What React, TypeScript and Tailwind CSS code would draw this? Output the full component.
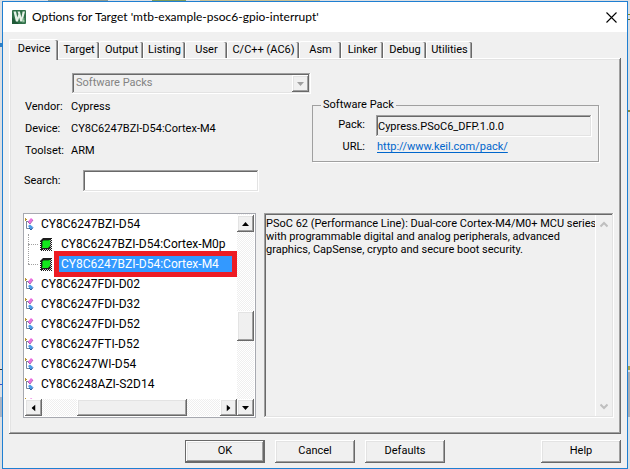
import type { ReactNode } from 'react'
import clsx from 'clsx'

const RAISED =
  'bg-[#f0f0f0] shadow-[inset_-1px_-1px_#696969,inset_1px_1px_#fff,inset_-2px_-2px_#a0a0a0,inset_2px_2px_#e3e3e3]'
const SUNKEN =
  'shadow-[inset_-1px_-1px_#fff,inset_1px_1px_#a0a0a0,inset_-2px_-2px_#e3e3e3,inset_2px_2px_#696969]'
const TRACK = 'bg-[repeating-conic-gradient(#fff_0_25%,#efefef_0_50%)] bg-[size:2px_2px]'

const TABS = [
  { label: 'Device', width: 'w-[49px]' },
  { label: 'Target', width: 'w-[41px]' },
  { label: 'Output', width: 'w-[44px]' },
  { label: 'Listing', width: 'w-[42px]' },
  { label: 'User', width: 'w-[42px]' },
  { label: 'C/C++ (AC6)', width: 'w-[72px]' },
  { label: 'Asm', width: 'w-[42px]' },
  { label: 'Linker', width: 'w-[42px]' },
  { label: 'Debug', width: 'w-[43px]' },
  { label: 'Utilities', width: 'w-[46px]' },
]

const DETAILS = [
  ['Vendor:', 'Cypress'],
  ['Device:', 'CY8C6247BZI-D54:Cortex-M4'],
  ['Toolset:', 'ARM'],
]

const DEVICES = [
  {
    name: 'CY8C6247BZI-D54',
    cores: ['CY8C6247BZI-D54:Cortex-M0p', 'CY8C6247BZI-D54:Cortex-M4'],
  },
  { name: 'CY8C6247FDI-D02' },
  { name: 'CY8C6247FDI-D32' },
  { name: 'CY8C6247FDI-D52' },
  { name: 'CY8C6247FTI-D52' },
  { name: 'CY8C6247WI-D54' },
  { name: 'CY8C6248AZI-S2D14' },
  { name: '' },
]

const SELECTED = 'CY8C6247BZI-D54:Cortex-M4'

const DESCRIPTION = `PSoC 62 (Performance Line): Dual-core Cortex-M4/M0+ MCU series
with programmable digital and analog peripherals, advanced
graphics, CapSense, crypto and secure boot security.`

function AppIcon() {
  return (
    <svg className="size-[14px]" viewBox="0 0 14 14" aria-hidden="true">
      <rect width="14" height="14" rx="1" fill="#2f7048" />
      <path d="M0 14V7L7 14Z" fill="#1f5a38" />
      <path d="M1.500 1.500h2.500l1.300 6L6.400 4 5.500 1.500h2.400l1.500 6L10.600 1.500h2.400L10.400 11.500H8.200L7.200 7.500 6 11.500H3.900Z" fill="#e6f1e7" />
      <path d="M10 8.500h2.500v1h-1.200v.6h1.200v2.200H10v-.8h1.200v-.6H10Z" fill="#a5cfae" />
    </svg>
  )
}

function FamilyIcon() {
  return (
    <svg className="h-[14px] w-[9px] shrink-0" viewBox="0 0 9 14" aria-hidden="true">
      <path d="M0 1h1v1h1v1H1v1H0Z" fill="#b8912c" />
      <path d="M1.500 4v7.500M1.500 4.500H4M1.500 11.500H4" stroke="#77839b" fill="none" />
      <path d="M3 4.500 6 1l2 1.500L5 6.500Z" fill="#ea6fe0" />
      <path d="M3 5 5 7l3-4" stroke="#9c3fa0" strokeWidth=".8" fill="none" />
      <path d="m3 9 2-1.500L8 10l-2 3Z" fill="#4a9be8" />
      <path d="m4 11 2 2 2-2.500" stroke="#245a9e" fill="none" />
    </svg>
  )
}

function ChipIcon() {
  return (
    <svg className="h-[13px] w-3 shrink-0" viewBox="0 0 12 13" aria-hidden="true">
      <path d="M3 0h9v13H0V3Z" fill="#1c1c1c" />
      <path d="M3 11.500h9M10.500 2v10" stroke="#b5b5b5" strokeDasharray="1 1" />
      <path d="M.5 4v9M0 12.500h12M11.500 1v12" stroke="#fff" strokeDasharray="1 1" />
      <path d="M4 2h6v6L8 10H2V4Z" fill="#12e81c" />
      <path d="M2 4h1v5H2ZM4 2h5v1H4Z" fill="#0a9a16" />
    </svg>
  )
}

function Arrow({ className }: { className?: string }) {
  return (
    <svg className={clsx('h-1 w-[7px]', className)} viewBox="0 0 7 4" aria-hidden="true">
      <path d="M0 0h7L3.500 4Z" fill="currentColor" />
    </svg>
  )
}

function Chevron({ className }: { className?: string }) {
  return (
    <svg className={clsx('h-[7px] w-2', className)} viewBox="0 0 8 7" aria-hidden="true">
      <path d="m.5 1.500 3.500 3.500 3.500-3.500" stroke="#bfbfbf" strokeWidth="2" fill="none" />
    </svg>
  )
}

function ScrollButton({ label, className }: { label: string; className?: string }) {
  return (
    <button
      type="button"
      aria-label={label}
      className={clsx('flex size-[17px] shrink-0 items-center justify-center', RAISED)}
    >
      <Arrow className={className} />
    </button>
  )
}

function DialogButton({ children, primary }: { children: ReactNode; primary?: boolean }) {
  return (
    <button
      type="button"
      className={clsx('h-[23px] w-20', RAISED, primary && 'border border-[#696969]')}
    >
      {children}
    </button>
  )
}

function TreeRow({ name }: { name: string }) {
  return (
    <div className="flex h-5 items-center gap-[7px]">
      <FamilyIcon />
      <span>{name}</span>
    </div>
  )
}

function CoreRow({ name, selected }: { name: string; selected: boolean }) {
  return (
    <li
      role="treeitem"
      aria-selected={selected}
      className="relative ml-[3px] flex h-5 items-center before:mr-0.5 before:w-[10px] before:border-t before:border-dotted before:border-[#a0a0a0]"
    >
      <ChipIcon />
      <span className={clsx('ml-[7px] flex-1 pl-0.5 leading-4', selected && 'mr-[5px] bg-[#3399ff] text-white')}>
        {name}
      </span>
      {selected && (
        <span className="absolute -top-[3px] right-0 left-[26px] h-[26px] border-[5px] border-[#ed1c24]" />
      )}
    </li>
  )
}

function DeviceTree() {
  return (
    <div className="flex w-[233px] flex-col border border-[#a7a9b0] bg-white px-px pb-px">
      <div className="flex min-h-0 flex-1">
        <ul
          role="tree"
          aria-label="Devices"
          className="h-[185px] flex-1 overflow-hidden text-[12px] whitespace-nowrap"
        >
          {DEVICES.map((device) => (
            <li key={device.name} role="treeitem">
              <TreeRow name={device.name} />
              {device.cores && (
                <ul role="group" className="relative">
                  <span className="absolute top-0 left-[3px] h-[30px] border-l border-dotted border-[#a0a0a0]" />
                  {device.cores.map((core) => (
                    <CoreRow key={core} name={core} selected={core === SELECTED} />
                  ))}
                </ul>
              )}
            </li>
          ))}
        </ul>
        <div className={clsx('flex w-[17px] flex-col pt-px', TRACK)}>
          <ScrollButton label="Scroll up" className="rotate-180" />
          <div className="flex-[78]" />
          <div className={clsx('h-[30px]', RAISED)} />
          <div className="flex-[58]" />
        </div>
      </div>
      <div className={clsx('flex h-[17px]', TRACK)}>
        <ScrollButton label="Scroll left" className="rotate-90" />
        <div className="flex-[35]" />
        <div className={clsx('w-[110px]', RAISED)} />
        <div className="flex-[33]" />
        <ScrollButton label="Scroll right" className="-rotate-90" />
        <ScrollButton label="Scroll down" />
      </div>
    </div>
  )
}

function SoftwarePack() {
  return (
    <fieldset className="mt-[25px] mr-[15px] h-[64px] min-w-0 flex-1 border border-[#a0a0a0] px-[6px] pt-[3px] shadow-[1px_1px_#fff]">
      <legend className="ml-0.5 px-0.5 leading-[14px]">Software Pack</legend>
      <div className="flex h-[22px] items-center gap-[11px]">
        <label htmlFor="pack" className="w-[46px] pb-0.5 text-right">
          Pack:
        </label>
        <input
          id="pack"
          readOnly
          value="Cypress.PSoC6_DFP.1.0.0"
          className={clsx('h-[22px] min-w-0 flex-1 px-0.5', SUNKEN)}
        />
      </div>
      <div className="flex h-5 items-center gap-[11px]">
        <span className="w-[46px] text-right">URL:</span>
        <a href="http://www.keil.com/pack/" className="pl-px text-[#0066cc] underline underline-offset-2">
          http://www.keil.com/pack/
        </a>
      </div>
    </fieldset>
  )
}

function DevicePanel() {
  return (
    <div className={clsx('flex flex-1 flex-col px-[14px] pt-[15px] pb-4', RAISED)}>
      <div className="-mr-[7px] flex">
        <div className="w-[289px] shrink-0">
          <div className="relative ml-[49px] h-[21px] w-[239px]">
            <select
              disabled
              aria-label="Software Packs"
              className={clsx('h-[21px] w-full appearance-none px-1 text-[#838383] opacity-100', SUNKEN)}
            >
              <option>Software Packs</option>
            </select>
            <span
              className={clsx(
                'pointer-events-none absolute top-0.5 right-0.5 flex h-[17px] w-[17px] items-center justify-center text-[#a0a0a0]',
                RAISED,
              )}
            >
              <Arrow />
            </span>
          </div>
          <dl className="mt-0.5 pl-0.5">
            {DETAILS.map(([term, value]) => (
              <div key={term} className="flex h-[22px] items-center">
                <dt className="w-[46px]">{term}</dt>
                <dd>{value}</dd>
              </div>
            ))}
          </dl>
          <div className="mt-2 flex h-[22px] items-center pl-px">
            <label htmlFor="search" className="w-[59px]">
              Search:
            </label>
            <input id="search" className={clsx('h-[22px] w-44 bg-white px-1', SUNKEN)} />
          </div>
        </div>
        <SoftwarePack />
      </div>

      <div className="mt-[21px] -mr-[7px] flex flex-1 gap-2">
        <DeviceTree />
        <div className={clsx('flex min-w-0 flex-1 p-0.5', SUNKEN)}>
          <textarea
            readOnly
            wrap="off"
            aria-label="Description"
            value={DESCRIPTION}
            className="-mr-1 min-w-0 flex-1 resize-none overflow-hidden pt-0.5 leading-[13px]"
          />
          <div className="flex w-[17px] flex-col items-center justify-between border-l border-white py-[6px]">
            <Chevron className="rotate-180" />
            <Chevron />
          </div>
        </div>
      </div>
    </div>
  )
}

// Slivers of the editor window that show round the dialog
function Backdrop() {
  return (
    <div aria-hidden="true" className="absolute inset-0 overflow-hidden bg-[#dcdfe3]">
      <span className="absolute top-0 left-[48px] h-px w-[60px] bg-[#8d9a91]" />
      <span className="absolute top-0 left-[152px] h-px w-[34px] bg-[#7f9b5a]" />
      <span className="absolute top-0 left-[200px] h-px w-[120px] bg-[#c9bf93]" />
      <span className="absolute top-[43px] left-0 h-1 w-0.5 bg-[#2f7fc4]" />
      <span className="absolute top-[369px] left-0 h-px w-0.5 bg-[#333]" />
      <span className="absolute top-[384px] left-0 h-px w-0.5 bg-[#3b4fc4]" />
      <span className="absolute top-[397px] left-0 h-[20px] w-0.5 bg-[#a9b4c4]" />
      <span className="absolute top-[14px] right-0 h-px w-0.5 bg-[#8a8a1c]" />
      <span className="absolute top-[19px] right-0 h-px w-0.5 bg-[#5f6a1c]" />
      <span className="absolute top-[110px] right-0 h-0.5 w-0.5 bg-[#8a8a3c]" />
      <span className="absolute top-[366px] right-0 h-1 w-0.5 bg-[#a8a04c]" />
      <span className="absolute top-[372px] right-0 h-[45px] w-0.5 bg-[#a9adb4]" />
    </div>
  )
}

export default function App() {
  return (
    <div className="relative flex min-h-screen flex-col px-0.5 pt-px font-['Roboto',sans-serif] text-[11px] text-black">
      <Backdrop />
      <main className="relative flex flex-1 flex-col border border-[#1f7fd2] bg-[#f0f0f0]">
        <header className="flex h-[30px] items-center bg-white pr-[10px] pl-[9px]">
          <AppIcon />
          <h1 className="ml-[6px] flex-1 font-['Lato',sans-serif] text-[12px] whitespace-nowrap">
            Options for Target 'mtb-example-psoc6-gpio-interrupt'
          </h1>
          <button type="button" aria-label="Close" className="flex size-3 items-center justify-center">
            <svg className="size-[11px]" viewBox="0 0 11 11" aria-hidden="true">
              <path d="m.5.5 10 10M10.500.5l-10 10" stroke="#000" strokeWidth="1.100" />
            </svg>
          </button>
        </header>

        <div className="flex flex-1 flex-col px-[6px] pt-[7px] pb-[5px]">
          <div role="tablist" className="relative flex h-[19px] items-end">
            {TABS.map((tab, i) => (
              <button
                key={tab.label}
                type="button"
                role="tab"
                aria-selected={i === 0}
                className={clsx(
                  'shrink-0 rounded-t-xs border-t border-l border-white bg-[#f0f0f0] whitespace-nowrap shadow-[inset_-1px_0_#696969,inset_-2px_0_#a0a0a0]',
                  tab.width,
                  i === 0 ? '-mb-0.5 h-[21px] pb-0.5' : 'h-[17px]',
                )}
              >
                {tab.label}
              </button>
            ))}
          </div>
          <DevicePanel />
          <footer className="mt-[6px] flex gap-[10px] pl-44">
            <DialogButton primary>OK</DialogButton>
            <DialogButton>Cancel</DialogButton>
            <DialogButton>Defaults</DialogButton>
            <div className="ml-auto">
              <DialogButton>Help</DialogButton>
            </div>
          </footer>
        </div>
      </main>
    </div>
  )
}
